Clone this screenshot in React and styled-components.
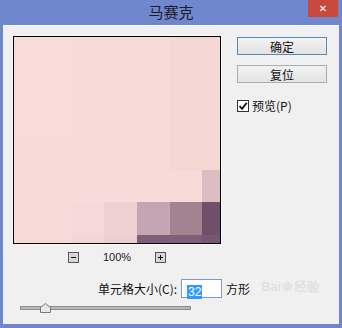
import React from 'react';
import styled, { createGlobalStyle } from 'styled-components';

const GlobalStyle = createGlobalStyle`
  html, body {
    margin: 0;
    padding: 0;
    background: #6f87cd;
  }
  body {
    font-family: "Noto Sans CJK SC", "Noto Sans", sans-serif;
    font-size: 12px;
    color: #111;
  }
`;

// mosaic blocks in preview coordinates (inner area 206x206)
const blocks = [
  { x: 188, y: 133, w: 18, h: 32, c: '#dcbdc1' },
  { x: 58, y: 165, w: 32, h: 33, c: '#f5d8d7' },
  { x: 90, y: 165, w: 33, h: 33, c: '#efd1d2' },
  { x: 123, y: 165, w: 33, h: 33, c: '#c4a5b2' },
  { x: 156, y: 165, w: 32, h: 33, c: '#a48390' },
  { x: 188, y: 165, w: 18, h: 33, c: '#6f4f69' },
  { x: 58, y: 198, w: 32, h: 8, c: '#f3d5d5' },
  { x: 90, y: 198, w: 33, h: 8, c: '#eccdd0' },
  { x: 123, y: 198, w: 33, h: 8, c: '#7c5e78' },
  { x: 156, y: 198, w: 32, h: 8, c: '#7f6079' },
  { x: 188, y: 198, w: 18, h: 8, c: '#775873' },
];

export default function App() {
  return (
    <>
      <GlobalStyle />
      <Window>
        <TitleBar>
          <Title>马赛克</Title>
          <CloseButton>✕</CloseButton>
        </TitleBar>
        <Body>
          <TopRow>
            <PreviewColumn>
              <Preview>
                <svg width="206" height="206" viewBox="0 0 206 206">
                  <rect x="0" y="0" width="206" height="206" fill="#f8dbd8" />
                  <rect x="0" y="0" width="58" height="100" fill="#f9dcd9" />
                  <rect x="156" y="0" width="50" height="133" fill="#f5d7d4" />
                  {blocks.map((b, i) => (
                    <rect key={i} x={b.x} y={b.y} width={b.w} height={b.h} fill={b.c} />
                  ))}
                </svg>
              </Preview>
              <ZoomBar>
                <ZoomBox>
                  <svg width="11" height="11" viewBox="0 0 11 11">
                    <rect x="0.5" y="0.5" width="10" height="10" fill="#d6d6d6" stroke="#555" />
                    <line x1="3" y1="5.5" x2="8" y2="5.5" stroke="#111" />
                  </svg>
                </ZoomBox>
                <ZoomText>100%</ZoomText>
                <ZoomBox>
                  <svg width="11" height="11" viewBox="0 0 11 11">
                    <rect x="0.5" y="0.5" width="10" height="10" fill="#d6d6d6" stroke="#555" />
                    <line x1="3" y1="5.5" x2="8" y2="5.5" stroke="#111" />
                    <line x1="5.5" y1="3" x2="5.5" y2="8" stroke="#111" />
                  </svg>
                </ZoomBox>
              </ZoomBar>
            </PreviewColumn>
            <SideColumn>
              <Button $primary>确定</Button>
              <Button>复位</Button>
              <CheckRow>
                <CheckBox>
                  <svg width="10" height="10" viewBox="0 0 10 10">
                    <path d="M1.5 5 L4 7.8 L8.8 1.8" fill="none" stroke="#111" strokeWidth="1.8" />
                  </svg>
                </CheckBox>
                <span>预览(P)</span>
              </CheckRow>
            </SideColumn>
          </TopRow>
          <SizeRow>
            <Label>单元格大小(C):</Label>
            <Input>
              <Selected>32</Selected>
            </Input>
            <Label>方形</Label>
          </SizeRow>
          <SliderRow>
            <Track />
            <Thumb>
              <svg width="11" height="10" viewBox="0 0 11 10">
                <path d="M0.5 9.5 L0.5 4.5 L5.5 0.5 L10.5 4.5 L10.5 9.5 Z" fill="#e8e8e8" stroke="#777" />
              </svg>
            </Thumb>
          </SliderRow>
          <Watermark>Bai<Paw>❀</Paw>经验</Watermark>
        </Body>
      </Window>
    </>
  );
}

const Window = styled.div`
  width: 342px;
  height: 328px;
  background: #6f87cd;
  display: flex;
  flex-direction: column;
`;

const TitleBar = styled.div`
  position: relative;
  height: 25px;
  display: flex;
  justify-content: center;
  align-items: center;
`;

const Title = styled.div`
  font-size: 15px;
  color: #1c1c2c;
  margin-top: -2px;
`;

const CloseButton = styled.div`
  position: absolute;
  top: 0;
  right: 4px;
  width: 30px;
  height: 17px;
  background: #c84a3e;
  color: #fff;
  font-family: "DejaVu Sans", sans-serif;
  font-size: 10px;
  font-weight: bold;
  display: flex;
  justify-content: center;
  align-items: center;
`;

const Body = styled.div`
  position: relative;
  margin: 0 3px 0 3px;
  height: 299px;
  background: #f0f0f0;
  border-top: 1px solid #fbfbfb;
  box-sizing: border-box;
  padding: 10px 0 0 10px;
  display: flex;
  flex-direction: column;
`;

const TopRow = styled.div`
  display: flex;
`;

const PreviewColumn = styled.div`
  display: flex;
  flex-direction: column;
  width: 208px;
`;

const Preview = styled.div`
  width: 206px;
  height: 206px;
  border: 1px solid #000;
  outline: 1px solid #fafafa;
  svg {
    display: block;
  }
`;

const ZoomBar = styled.div`
  display: flex;
  justify-content: center;
  align-items: center;
  gap: 24px;
  margin-top: 7px;
  height: 12px;
`;

const ZoomBox = styled.div`
  width: 11px;
  height: 11px;
  svg {
    display: block;
  }
`;

const ZoomText = styled.span`
  font-family: "Liberation Sans", sans-serif;
  font-size: 11px;
  color: #222;
`;

const SideColumn = styled.div`
  display: flex;
  flex-direction: column;
  margin-left: 16px;
  padding-top: 1px;
`;

const Button = styled.div`
  width: 90px;
  height: 18px;
  box-sizing: border-box;
  border: 1px solid ${p => (p.$primary ? '#4f8fb8' : '#acacac')};
  background: linear-gradient(#f2f2f2, #e3e3e3);
  display: flex;
  justify-content: center;
  align-items: center;
  font-size: 12px;
  color: #111;
  margin-bottom: 10px;
`;

const CheckRow = styled.div`
  display: flex;
  align-items: center;
  gap: 3px;
  font-size: 12px;
  margin-top: 4px;
`;

const CheckBox = styled.div`
  width: 12px;
  height: 12px;
  box-sizing: border-box;
  border: 1px solid #333;
  background: #fff;
  display: flex;
  justify-content: center;
  align-items: center;
`;

const SizeRow = styled.div`
  display: flex;
  align-items: center;
  margin-top: 16px;
  padding-left: 85px;
  height: 19px;
`;

const Label = styled.span`
  font-size: 12px;
  color: #111;
`;

const Input = styled.div`
  width: 41px;
  height: 19px;
  box-sizing: border-box;
  border: 1px solid #7a9cc8;
  background: #fff;
  margin: 0 4px 0 4px;
  padding: 2px 0 0 5px;
`;

const Selected = styled.span`
  display: inline-block;
  background: #3399ff;
  color: #fff;
  font-family: "Liberation Sans", sans-serif;
  font-size: 12px;
  line-height: 14px;
  padding: 0 1px;
`;

const SliderRow = styled.div`
  position: relative;
  margin: 5px 0 0 7px;
  width: 171px;
  height: 10px;
  display: flex;
  align-items: center;
`;

const Track = styled.div`
  width: 171px;
  height: 4px;
  box-sizing: border-box;
  border: 1px solid #8c8c8c;
  background: #b8b8b8;
`;

const Thumb = styled.div`
  position: absolute;
  left: 20px;
  top: 0;
  svg {
    display: block;
  }
`;

const Watermark = styled.div`
  position: absolute;
  left: 258px;
  top: 252px;
  font-family: "Liberation Sans", sans-serif;
  font-size: 13px;
  font-weight: bold;
  color: rgba(200, 200, 200, 0.4);
  pointer-events: none;
`;

const Paw = styled.span`
  font-size: 13px;
  margin: 0 1px;
`;
